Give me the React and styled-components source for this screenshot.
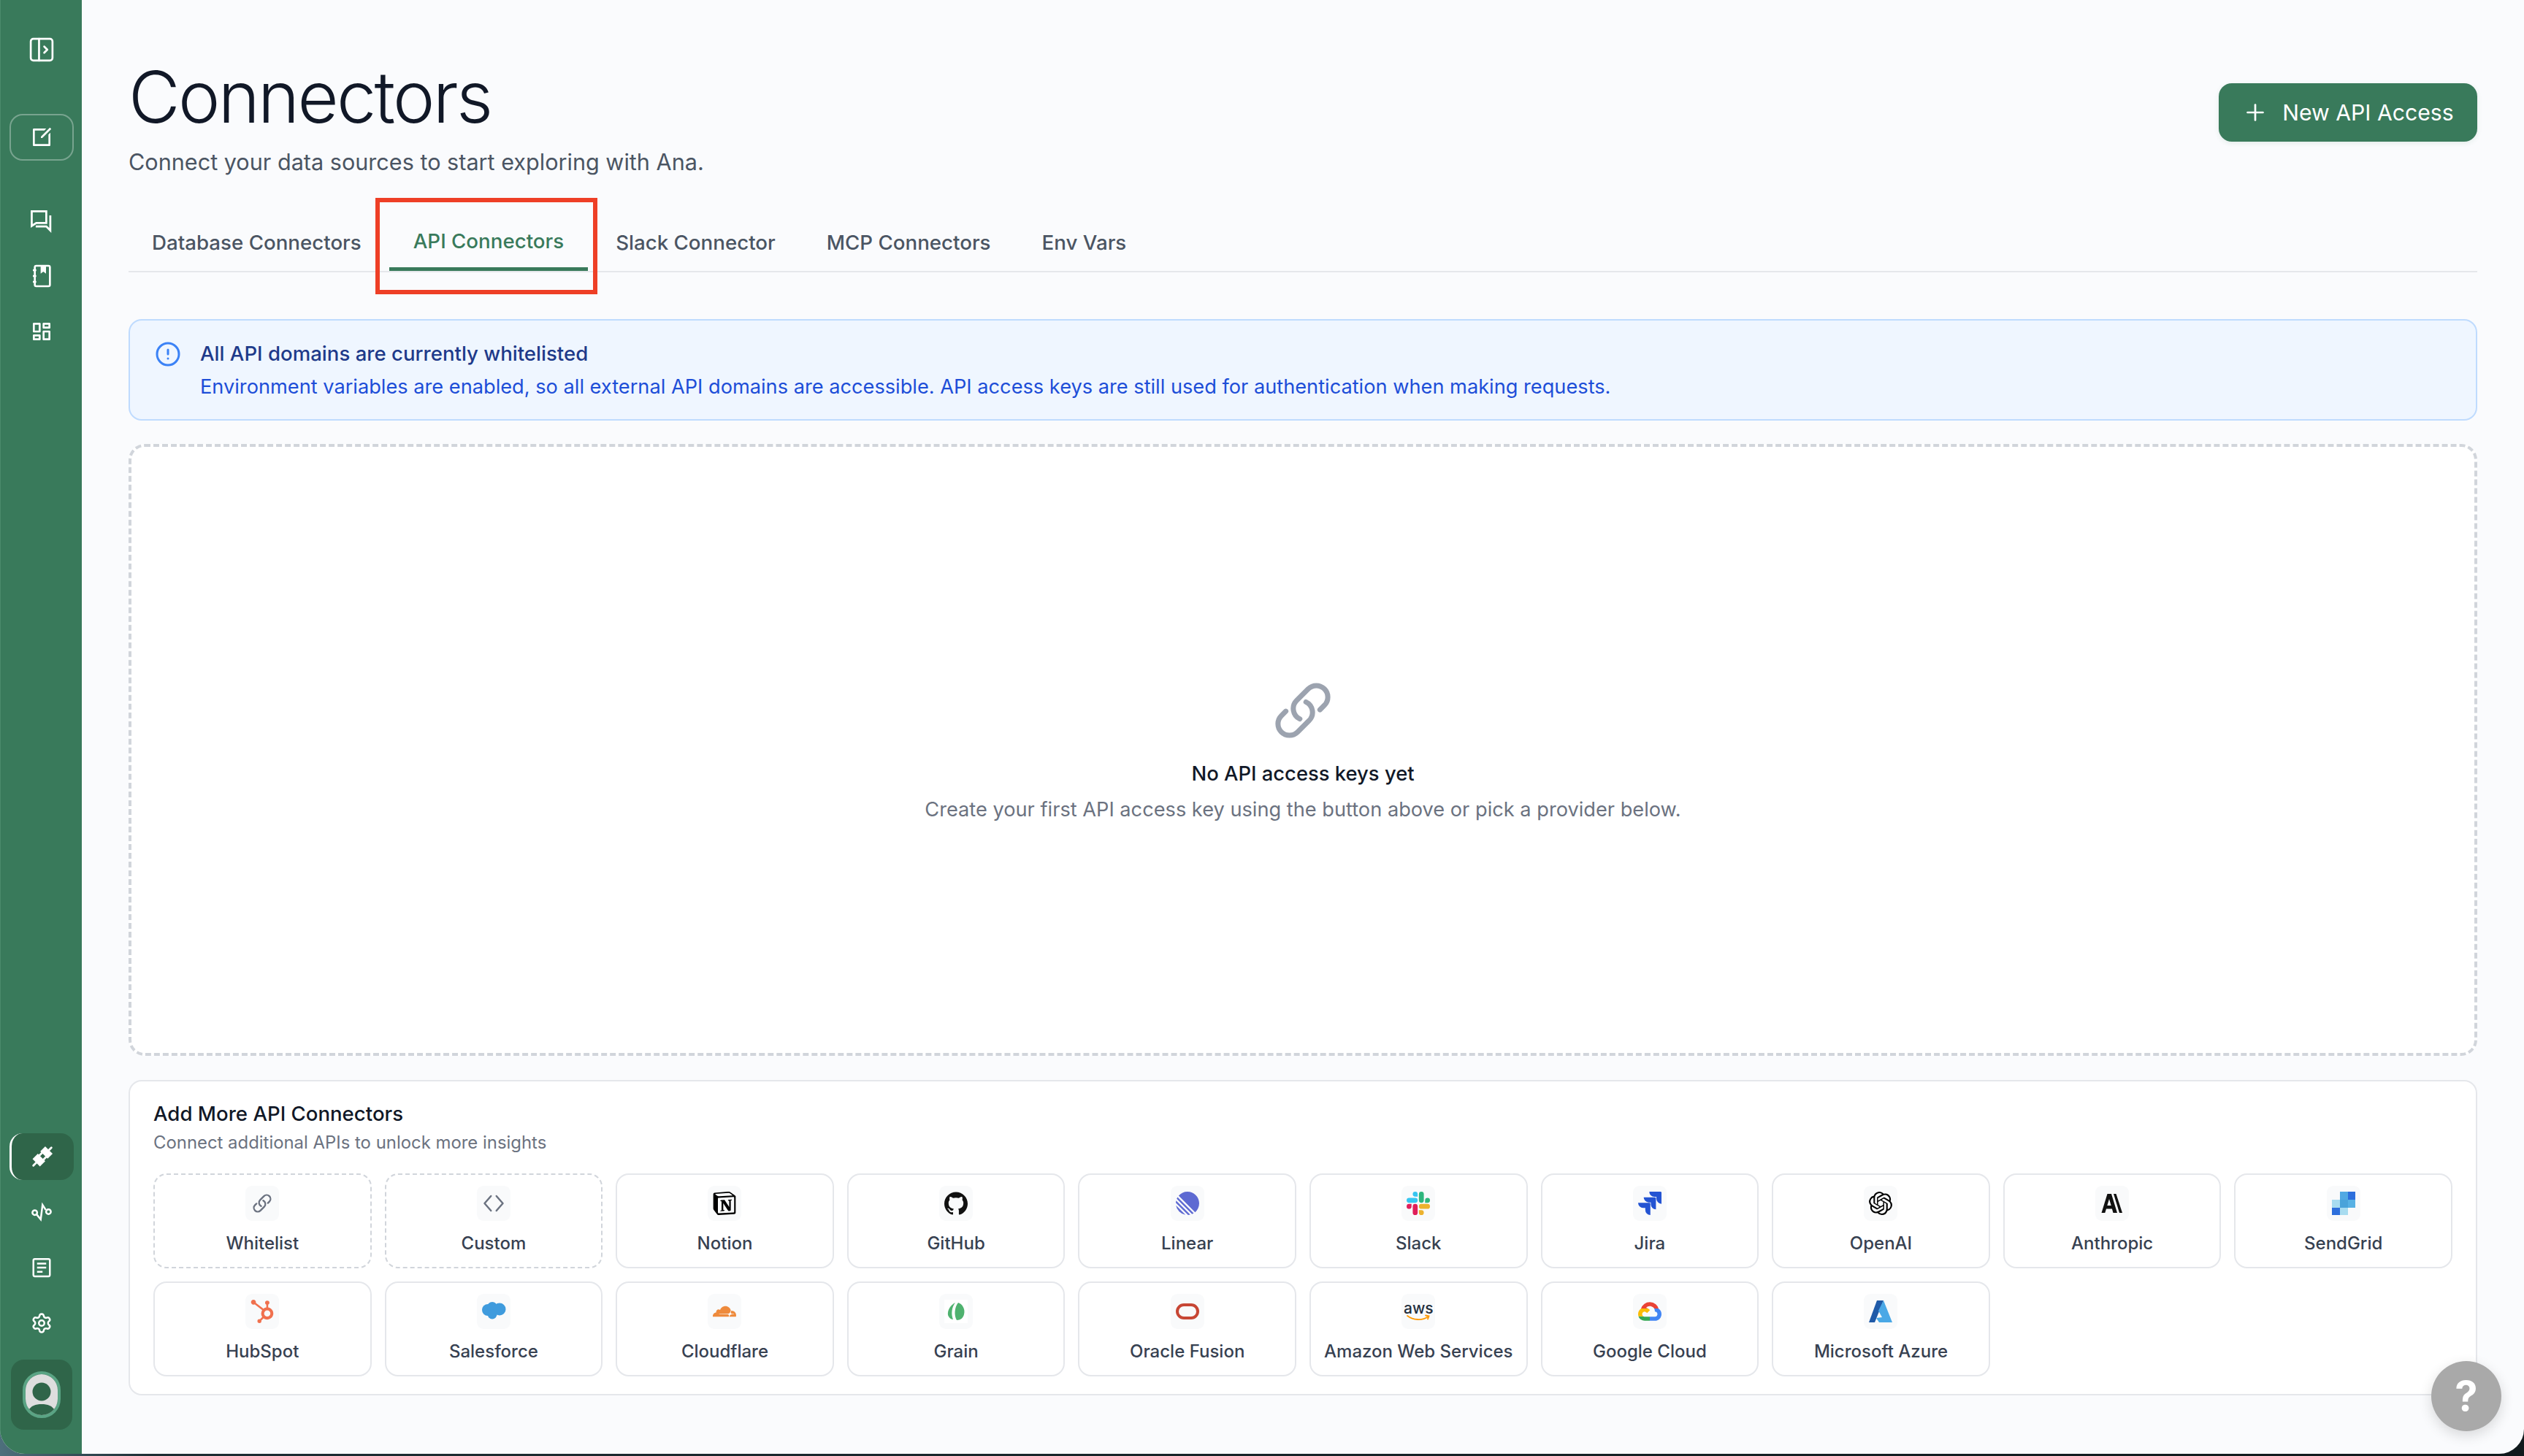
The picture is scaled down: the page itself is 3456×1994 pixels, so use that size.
import React from 'react';
import styled, { createGlobalStyle } from 'styled-components';
import { CircleAlert, Plus, Settings } from 'lucide-react';
import { RiDashboardLine, RiEditBoxLine } from 'react-icons/ri';
import { SiNotion, SiGithub, SiLinear, SiJira, SiOpenai, SiHubspot, SiCloudflare, SiGooglecloud } from 'react-icons/si';

const GlobalStyle = createGlobalStyle`
    * { box-sizing: border-box; }
    html, body {
        margin: 0;
        height: 100%;
        background: linear-gradient(90deg, #4d6f7c 0, #1d2d33 6%, #10191c 100%);
        font-family: 'Inter', 'Liberation Sans', sans-serif;
    }
`

const Shell = styled.div`
    display: flex;
    height: 1991px;
    border-radius: 0 0 34px 34px;
    overflow: hidden;
    background: #fafbfd;
`

const Sidebar = styled.nav`
    width: 112px;
    flex-shrink: 0;
    display: flex;
    flex-direction: column;
    align-items: center;
    padding: 36px 0 33px;
    background: #397a5b;
    border-left: 1px solid #4b8a6c;
`

const NavGroup = styled.div`
    display: flex;
    flex-direction: column;
    align-items: center;
    gap: 12px;
    margin-top: ${(props) => props.top || 0}px;
`

const NavItem = styled.div`
    width: 88px;
    height: 64px;
    display: flex;
    align-items: center;
    justify-content: center;
    color: #fff;
    border-radius: 18px;
    ${(props) => props.outlined ? 'border: 2px solid rgba(255,255,255,.32);' : ''}
    ${(props) => props.active ? 'background: #2f6549; border-left: 3px solid #fff;' : ''}
`

const Spacer = styled.div`
    flex: 1;
`

const AvatarBox = styled.div`
    width: 84px;
    height: 96px;
    margin-top: 18px;
    display: flex;
    align-items: center;
    justify-content: center;
    background: #2f6549;
    border-radius: 18px;
`

const Avatar = styled.div`
    width: 52px;
    height: 64px;
    border-radius: 26px;
    border: 4px solid #5aa484;
    overflow: hidden;
`

const Main = styled.main`
    flex: 1;
    min-width: 0;
    display: flex;
    flex-direction: column;
    padding: 85px 64px 80px;
`

const Header = styled.header`
    display: flex;
    justify-content: space-between;
    align-items: flex-start;
`

const Title = styled.h1`
    margin: 0;
    font-size: 97px;
    line-height: 96px;
    font-weight: 300;
    letter-spacing: -2.7px;
    color: #111827;
`

const Subtitle = styled.p`
    margin: 21px 0 0;
    font-size: 30.6px;
    line-height: 40px;
    color: #4b5563;
`

const NewButton = styled.button`
    width: 354px;
    height: 80px;
    margin-top: 29px;
    display: flex;
    align-items: center;
    justify-content: center;
    gap: 19px;
    border: 0;
    border-radius: 18px;
    background: #397a5b;
    color: #fff;
    font-family: inherit;
    font-size: 30.2px;
    box-shadow: 0 2px 6px rgba(57, 122, 91, .12);
`

const TabBar = styled.div`
    display: flex;
    gap: 6px;
    margin-top: 54px;
    border-bottom: 2px solid #e5e7eb;
`

const Tab = styled.div`
    position: relative;
    font-size: 27.7px;
    line-height: 40px;
    font-weight: 450;
    color: ${(props) => props.active ? '#397a5b' : '#4b5563'};
    padding: ${(props) => props.active ? '14px 33px 16px' : '16px 32px 19px'};
    ${(props) => props.active ? 'border-bottom: 5px solid #397a5b;' : ''}
`

const Callout = styled.span`
    position: absolute;
    left: -19px;
    right: -13px;
    top: -25px;
    bottom: -37px;
    border: 6px solid #ee3f26;
`

const Alert = styled.div`
    display: flex;
    gap: 26px;
    margin-top: 64px;
    padding: 25px 34px 24px;
    background: #eff6ff;
    border: 2px solid #bfdbfe;
    border-radius: 18px;
    color: #3b82f6;
`

const AlertIcon = styled.div`
    height: 36px;
    margin-top: 3px;
`

const AlertTitle = styled.div`
    font-size: 27.6px;
    line-height: 40px;
    font-weight: 450;
    color: #1e3a8a;
`

const AlertText = styled.div`
    margin-top: 6px;
    font-size: 27.2px;
    line-height: 40px;
    color: #1d4ed8;
`

const EmptyState = styled.section`
    flex: 1;
    margin-top: 32px;
    padding-top: 6px;
    display: flex;
    flex-direction: column;
    align-items: center;
    justify-content: center;
    background: #fff;
    border: 4px dashed #d1d5db;
    border-radius: 22px;
    color: #9ca3af;
`

const EmptyTitle = styled.h3`
    margin: 24px 0 0;
    font-size: 27.4px;
    line-height: 40px;
    font-weight: 450;
    color: #111827;
`

const EmptyText = styled.p`
    margin: 10px 0 0;
    font-size: 27.2px;
    line-height: 40px;
    color: #6b7280;
`

const AddCard = styled.section`
    margin-top: 33px;
    padding: 24px 32px;
    background: #fff;
    border: 2px solid #e5e7eb;
    border-radius: 18px;
`

const AddTitle = styled.h3`
    margin: 0;
    font-size: 27.6px;
    line-height: 40px;
    font-weight: 450;
    color: #111827;
`

const AddText = styled.p`
    margin: 2px 0 0;
    font-size: 23.9px;
    line-height: 36px;
    color: #6b7280;
`

const ProviderGrid = styled.div`
    display: grid;
    grid-template-columns: repeat(10, 1fr);
    gap: 18px;
    margin-top: 24px;
`

const Provider = styled.div`
    height: 130px;
    display: flex;
    flex-direction: column;
    align-items: center;
    padding-top: 15px;
    background: #fff;
    border: 2px ${(props) => props.dashed ? 'dashed #d1d5db' : 'solid #e5e7eb'};
    border-radius: 18px;
`

const LogoBox = styled.div`
    width: 46px;
    height: 48px;
    display: flex;
    flex-direction: column;
    align-items: center;
    justify-content: center;
    background: #f9fafb;
    border-radius: 9px;
    color: ${(props) => props.color || '#111'};
`

const ProviderName = styled.div`
    margin-top: 14px;
    font-size: 24px;
    line-height: 34px;
    font-weight: 450;
    color: #374151;
    white-space: nowrap;
`

const AwsText = styled.span`
    font-size: 21px;
    line-height: 17px;
    font-weight: 500;
    color: #232f3e;
`

const HelpButton = styled.button`
    position: fixed;
    right: 31px;
    bottom: 34px;
    width: 96px;
    height: 96px;
    border: 0;
    border-radius: 50%;
    background: #a9a9a9;
    color: #fff;
    font-family: inherit;
    font-size: 56px;
    font-weight: 700;
    box-shadow: 0 6px 18px rgba(0, 0, 0, .14);
`

const ChainIcon = ({ size }) => (
    <svg width={size} height={size} viewBox="0 0 24 24" fill="none" stroke="currentColor" strokeWidth="2" strokeLinecap="round" strokeLinejoin="round">
        <path d="M13.19 8.688a4.5 4.5 0 0 1 1.242 7.244l-4.5 4.5a4.5 4.5 0 0 1-6.364-6.364l1.757-1.757m13.35-.622 1.757-1.757a4.5 4.5 0 0 0-6.364-6.364l-4.5 4.5a4.5 4.5 0 0 0 1.242 7.244"/>
    </svg>
)

const PanelIcon = () => (
    <svg width="34" height="34" viewBox="0 0 24 24" fill="none" stroke="currentColor" strokeWidth="1.9" strokeLinejoin="round" strokeLinecap="round">
        <rect x="1.5" y="1.5" width="21" height="21" rx="2.5"/>
        <path d="M9.5 1.5v21M14.5 9l3 3-3 3"/>
    </svg>
)

const ChatIcon = () => (
    <svg width="33" height="33" viewBox="0 0 24 24" fill="none" stroke="currentColor" strokeWidth="2">
        <path d="M2.5 2.5h14.5v11.5H7L2.500 17z"/>
        <path d="M21 6.500v15l-4-4H6.500" />
    </svg>
)

const NotebookIcon = () => (
    <svg width="32" height="32" viewBox="0 0 24 24" fill="none" stroke="currentColor" strokeWidth="2">
        <rect x="5" y="1.500" width="15.500" height="21" rx="1.500"/>
        <path d="M11 1.500h5.500v8l-2.750-2-2.750 2z" fill="currentColor" stroke="none"/>
        <path d="M3 6h3.500M3 12h3.500M3 18h3.500"/>
    </svg>
)

const PlugIcon = () => (
    <svg width="38" height="38" viewBox="0 0 24 24" fill="currentColor" stroke="currentColor" strokeWidth="1.800" strokeLinecap="round">
        <g transform="rotate(45 12 12)">
            <path d="M12 1v4M12 19v4M9.500 10v3M14.500 10v3" />
            <rect x="7.500" y="4" width="9" height="6" stroke="none"/>
            <rect x="7.500" y="13" width="9" height="6.500" stroke="none"/>
        </g>
    </svg>
)

const PulseIcon = () => (
    <svg width="30" height="30" viewBox="0 0 24 24" fill="none" stroke="currentColor" strokeWidth="2">
        <circle cx="4.500" cy="12.500" r="2.600"/>
        <circle cx="19.500" cy="11.500" r="2.600"/>
        <path d="M6.500 14.500L11 20l2-16 3.500 5.500"/>
    </svg>
)

const DocIcon = () => (
    <svg width="30" height="30" viewBox="0 0 24 24" fill="none" stroke="currentColor" strokeWidth="2">
        <rect x="3" y="2.500" width="18" height="19" rx="1.500"/>
        <path d="M7 7.500h10M7 12h10M7 16.500h6"/>
    </svg>
)

const AvatarArt = () => (
    <svg width="44" height="56" viewBox="0 0 44 56">
        <rect width="44" height="56" fill="#dedede"/>
        <circle cx="22" cy="24" r="12.500" fill="#2f6549"/>
        <path d="M4 50c3-7 10-9 18-9s15 2 18 9c-5 4-11 6-18 6S9 54 4 50z" fill="#2f6549"/>
    </svg>
)

const CodeIcon = () => (
    <svg width="30" height="30" viewBox="0 0 24 24" fill="none" stroke="#6b7280" strokeWidth="2" strokeLinecap="round" strokeLinejoin="round">
        <path d="M9 4l-7 8 7 8M15 4l7 8-7 8"/>
    </svg>
)

const SlackLogo = () => (
    <svg width="32" height="32" viewBox="0 0 24 24">
        <path fill="#e01e5a" d="M5.042 15.165a2.528 2.528 0 0 1-2.52 2.523A2.528 2.528 0 0 1 0 15.165a2.527 2.527 0 0 1 2.522-2.52h2.52v2.52zM6.313 15.165a2.527 2.527 0 0 1 2.521-2.52 2.527 2.527 0 0 1 2.521 2.52v6.313A2.528 2.528 0 0 1 8.834 24a2.528 2.528 0 0 1-2.521-2.522v-6.313z"/>
        <path fill="#36c5f0" d="M8.834 5.042a2.528 2.528 0 0 1-2.521-2.52A2.528 2.528 0 0 1 8.834 0a2.528 2.528 0 0 1 2.521 2.522v2.52H8.834zM8.834 6.313a2.528 2.528 0 0 1 2.521 2.521 2.528 2.528 0 0 1-2.521 2.521H2.522A2.528 2.528 0 0 1 0 8.834a2.528 2.528 0 0 1 2.522-2.521h6.312z"/>
        <path fill="#2eb67d" d="M18.956 8.834a2.528 2.528 0 0 1 2.522-2.521A2.528 2.528 0 0 1 24 8.834a2.528 2.528 0 0 1-2.522 2.521h-2.522V8.834zM17.688 8.834a2.528 2.528 0 0 1-2.523 2.521 2.527 2.527 0 0 1-2.52-2.521V2.522A2.527 2.527 0 0 1 15.165 0a2.528 2.528 0 0 1 2.523 2.522v6.312z"/>
        <path fill="#ecb22e" d="M15.165 18.956a2.528 2.528 0 0 1 2.523 2.522A2.528 2.528 0 0 1 15.165 24a2.527 2.527 0 0 1-2.52-2.522v-2.522h2.52zM15.165 17.688a2.527 2.527 0 0 1-2.52-2.523 2.526 2.526 0 0 1 2.52-2.52h6.313A2.527 2.527 0 0 1 24 15.165a2.528 2.528 0 0 1-2.522 2.523h-6.313z"/>
    </svg>
)

const AnthropicLogo = () => (
    <svg width="32" height="28" viewBox="0 0 32 28" fill="#111">
        <path d="M9.500 1h5.500l8 26h-5.500l-1.600-5.500H8L6.300 27H1.500zM12 8L9.300 17h5.400z"/>
        <path d="M18 1h3.500l8.500 26h-4z"/>
    </svg>
)

const SendGridLogo = () => (
    <svg width="32" height="32" viewBox="0 0 32 32">
        <rect x="11" y="0" width="11" height="11" fill="#51a9e3"/>
        <rect x="22" y="0" width="10" height="11" fill="#2d6fdc"/>
        <rect x="0" y="11" width="11" height="11" fill="#a8dcf0"/>
        <rect x="11" y="11" width="11" height="11" fill="#4aa3da"/>
        <rect x="22" y="11" width="10" height="11" fill="#58b1e4"/>
        <rect x="0" y="22" width="11" height="10" fill="#2d6fdc"/>
        <rect x="11" y="22" width="11" height="10" fill="#a8dcf0"/>
    </svg>
)

const SalesforceLogo = () => (
    <svg width="34" height="28" viewBox="0 0 34 28" fill="#3f9bdd">
        <circle cx="9" cy="12" r="8"/>
        <circle cx="15" cy="8" r="7"/>
        <circle cx="25" cy="11" r="8.500"/>
        <circle cx="15" cy="18" r="6.500"/>
    </svg>
)

const GrainLogo = () => (
    <svg width="32" height="32" viewBox="0 0 32 32">
        <rect x="0" y="0" width="32" height="32" fill="#fff"/>
        <path d="M15 4C9 7 4 14 5 21c1 3 4 6 7 6-3-7-2-17 3-23z" fill="#4fb26f"/>
        <path d="M19 4c6 2 10 9 8 16-1 5-5 8-10 8-4-7-3-18 2-24z" fill="#4fb26f"/>
    </svg>
)

const OracleLogo = () => (
    <svg width="32" height="22" viewBox="0 0 32 22" fill="none" stroke="#c74634" strokeWidth="4">
        <rect x="2" y="2" width="28" height="18" rx="9"/>
    </svg>
)

const AwsLogo = () => (
    <>
        <AwsText>aws</AwsText>
        <svg width="32" height="10" viewBox="0 0 32 10" fill="none" stroke="#f90" strokeWidth="1.800" strokeLinecap="round">
            <path d="M1 2c8 6 20 7 29 1M26 1.500l4.500 1-1.500 4"/>
        </svg>
    </>
)

const GOOGLE_PARTS = [
    { id: 'gc-red', color: '#ea4335', x: 0, y: 0, w: 24, h: 9 },
    { id: 'gc-blue', color: '#4285f4', x: 12, y: 9, w: 12, h: 15 },
    { id: 'gc-green', color: '#34a853', x: 0, y: 17, w: 12, h: 7 },
    { id: 'gc-yellow', color: '#fbbc05', x: 0, y: 9, w: 12, h: 8 },
];

const GoogleCloudLogo = () => (
    <svg width="32" height="32" viewBox="0 0 24 24">
        {GOOGLE_PARTS.map((part) => (
            <g key={part.id} clipPath={`url(#${part.id})`} color={part.color}>
                <clipPath id={part.id}>
                    <rect x={part.x} y={part.y} width={part.w} height={part.h}/>
                </clipPath>
                <SiGooglecloud size={24}/>
            </g>
        ))}
    </svg>
)

const AzureLogo = () => (
    <svg width="32" height="30" viewBox="0 0 32 30">
        <path d="M11 0h9L8 30H0z" fill="#1f5aa8"/>
        <path d="M20 0l12 30H14l-4-6 8-1-5-9z" fill="#4aa8e6"/>
    </svg>
)

const providers = [
    { name: 'Whitelist', dashed: true, color: '#6b7280', logo: <ChainIcon size={28}/> },
    { name: 'Custom', dashed: true, logo: <CodeIcon/> },
    { name: 'Notion', color: '#000', logo: <SiNotion size={32}/> },
    { name: 'GitHub', color: '#111', logo: <SiGithub size={32}/> },
    { name: 'Linear', color: '#5e6ad2', logo: <SiLinear size={32}/> },
    { name: 'Slack', logo: <SlackLogo/> },
    { name: 'Jira', color: '#2454d3', logo: <SiJira size={32}/> },
    { name: 'OpenAI', color: '#000', logo: <SiOpenai size={32}/> },
    { name: 'Anthropic', logo: <AnthropicLogo/> },
    { name: 'SendGrid', logo: <SendGridLogo/> },
    { name: 'HubSpot', color: '#f0714e', logo: <SiHubspot size={32}/> },
    { name: 'Salesforce', logo: <SalesforceLogo/> },
    { name: 'Cloudflare', color: '#ee8a3c', logo: <SiCloudflare size={32}/> },
    { name: 'Grain', logo: <GrainLogo/> },
    { name: 'Oracle Fusion', logo: <OracleLogo/> },
    { name: 'Amazon Web Services', logo: <AwsLogo/> },
    { name: 'Google Cloud', logo: <GoogleCloudLogo/> },
    { name: 'Microsoft Azure', logo: <AzureLogo/> },
];

const tabs = ['Database Connectors', 'API Connectors', 'Slack Connector', 'MCP Connectors', 'Env Vars'];

export default function App() {
    return (
        <Shell>
            <GlobalStyle/>
            <Sidebar>
                <NavItem><PanelIcon/></NavItem>
                <NavGroup top={56}>
                    <NavItem outlined><RiEditBoxLine size={32}/></NavItem>
                </NavGroup>
                <NavGroup top={50}>
                    <NavItem><ChatIcon/></NavItem>
                    <NavItem><NotebookIcon/></NavItem>
                    <NavItem><RiDashboardLine size={32}/></NavItem>
                </NavGroup>
                <Spacer/>
                <NavGroup>
                    <NavItem active><PlugIcon/></NavItem>
                    <NavItem><PulseIcon/></NavItem>
                    <NavItem><DocIcon/></NavItem>
                    <NavItem><Settings size={30}/></NavItem>
                </NavGroup>
                <AvatarBox>
                    <Avatar><AvatarArt/></Avatar>
                </AvatarBox>
            </Sidebar>
            <Main>
                <Header>
                    <div>
                        <Title>Connectors</Title>
                        <Subtitle>Connect your data sources to start exploring with Ana.</Subtitle>
                    </div>
                    <NewButton><Plus size={36} strokeWidth={1.8}/>New API Access</NewButton>
                </Header>
                <TabBar>
                    {tabs.map((tab) => (
                        <Tab key={tab} active={tab === 'API Connectors'}>
                            {tab}
                            {tab === 'API Connectors' && <Callout/>}
                        </Tab>
                    ))}
                </TabBar>
                <Alert>
                    <AlertIcon><CircleAlert size={36}/></AlertIcon>
                    <div>
                        <AlertTitle>All API domains are currently whitelisted</AlertTitle>
                        <AlertText>Environment variables are enabled, so all external API domains are accessible. API access keys are still used for authentication when making requests.</AlertText>
                    </div>
                </Alert>
                <EmptyState>
                    <ChainIcon size={84}/>
                    <EmptyTitle>No API access keys yet</EmptyTitle>
                    <EmptyText>Create your first API access key using the button above or pick a provider below.</EmptyText>
                </EmptyState>
                <AddCard>
                    <AddTitle>Add More API Connectors</AddTitle>
                    <AddText>Connect additional APIs to unlock more insights</AddText>
                    <ProviderGrid>
                        {providers.map((provider) => (
                            <Provider key={provider.name} dashed={provider.dashed}>
                                <LogoBox color={provider.color}>{provider.logo}</LogoBox>
                                <ProviderName>{provider.name}</ProviderName>
                            </Provider>
                        ))}
                    </ProviderGrid>
                </AddCard>
            </Main>
            <HelpButton>?</HelpButton>
        </Shell>
    )
}
